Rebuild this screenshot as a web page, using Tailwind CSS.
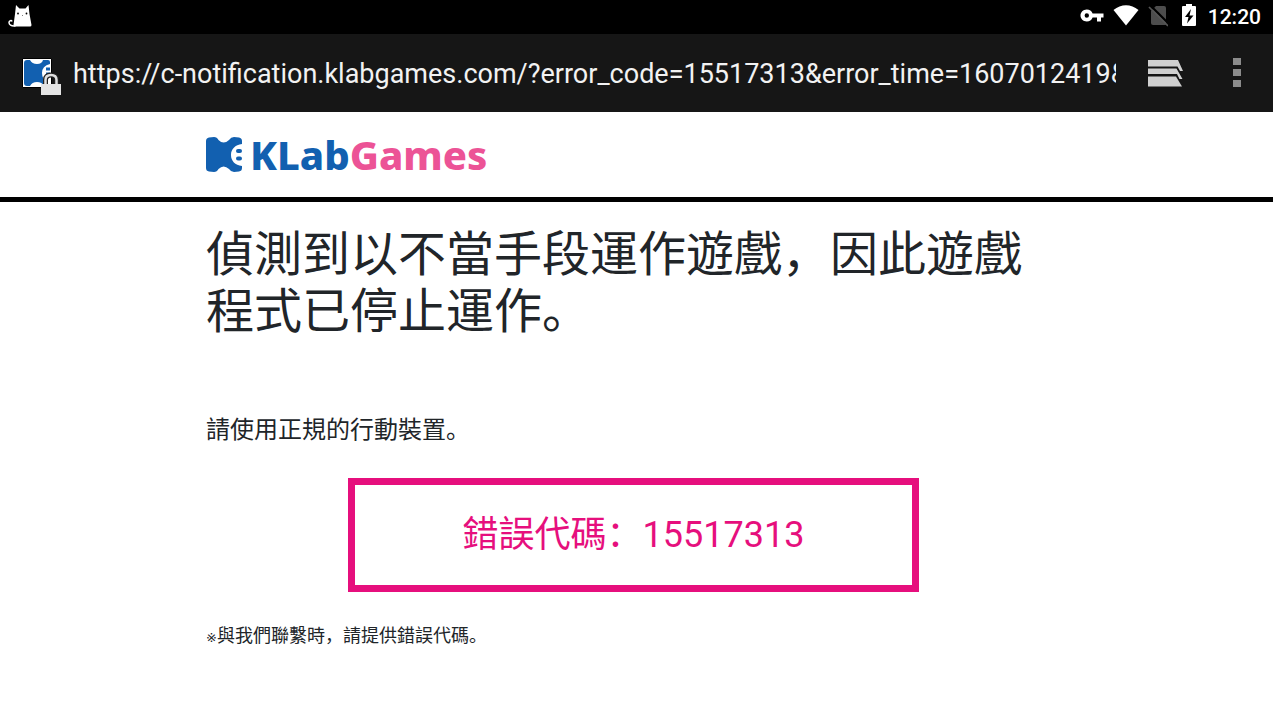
<!DOCTYPE html>
<html lang="zh-Hans">
<head>
    <meta charset="utf-8">
    <meta name="viewport" content="width=device-width, initial-scale=1">
    <title>KLabGames</title>
    <script src="https://cdn.jsdelivr.net/npm/@tailwindcss/browser@4"></script>
</head>
<body class="bg-white text-[#212529] font-[Roboto,'Noto_Sans_CJK_SC',sans-serif]">

<!-- Status bar -->
<div class="flex h-[34px] items-center justify-between bg-black pl-2 pr-3 text-white">
    <svg class="h-6 w-6" viewBox="0 0 24 24" fill="none">
        <path d="M8 0 L11.500 3.500 H17.500 L20.500 0 L21.500 9 L23.500 20 Q23.500 21.500 22 21.500 H7 Q5.500 21.500 5.500 20 L7 9 Z" fill="#fff"/>
        <path d="M7.500 21 C3 21.500 1 19.500 1 17.500 C1 15.500 3.500 15 4 16.500" stroke="#fff" stroke-width="1.500"/>
        <circle cx="10" cy="8.500" r="0.900" fill="#000"/>
        <circle cx="18.500" cy="8.500" r="0.900" fill="#000"/>
        <circle cx="14.500" cy="10.500" r="0.500" fill="#555"/>
    </svg>
    <div class="flex items-center">
        <svg class="h-6 w-6" viewBox="0 0 24 24" fill="#fff">
            <path fill-rule="evenodd" d="M12.600 8.500 C11.700 6.100 9.500 4.500 6.800 4.500 C3.100 4.500 0.500 7.300 0.500 10.500 C0.500 13.700 3.100 16.500 6.800 16.500 C9.500 16.500 11.700 14.900 12.600 12.500 H17 V16.500 H21 V12.500 H23.500 V8.500 Z M6.800 12.700 A2.200 2.200 0 1 1 6.800 8.300 A2.200 2.200 0 0 1 6.800 12.700 Z"/>
        </svg>
        <svg class="ml-2 h-6 w-7" viewBox="0 0 28 24" fill="#fff">
            <path d="M1.500 5 C9 -1.500 19 -1.500 26.500 5 L14 20.500 Z"/>
        </svg>
        <svg class="ml-2 h-6 w-5" viewBox="0 0 20 24">
            <path d="M8 1 H16 Q18 1 18 3 V19 Q18 20 17 20 H5 Q3 20 3 18 V6 Z" fill="#4d4d4d"/>
            <path d="M3 1 L21 19" stroke="#000" stroke-width="2"/>
            <path d="M1 2 L20 21" stroke="#555" stroke-width="1.700"/>
        </svg>
        <svg class="ml-[11px] h-6 w-5 overflow-visible" viewBox="0 0 20 24">
            <path d="M7 -1 H13 V1 H16 Q17 1 17 2 V20 Q17 21 16 21 H4 Q3 21 3 20 V2 Q3 1 4 1 H7 Z" fill="#fff"/>
            <path d="M12 4 L6 12 H9.500 L8 18.500 L14.500 10.500 H10.500 Z" fill="#000"/>
        </svg>
        <span class="ml-[9px] text-[21px] leading-6 font-medium">12:20</span>
    </div>
</div>

<!-- Address bar -->
<div class="flex h-[78px] items-center bg-[#161616] pl-[22px] pr-[25px]">
    <svg class="h-10 w-10 shrink-0 overflow-visible" viewBox="0 0 40 40" fill="none">
        <path d="M0.500 5.500 H29.500 V34.500 H0.500 Z" fill="#fff" stroke="#000"/>
        <path d="M2 10 Q2 7 5 7 H8 Q10 11 15 11 Q20 11 21 7 H26 Q28 7 28 9 V11 Q20 13 20 20 Q20 27 26 29 V33 H22 Q20 29 15 29 Q10 29 8 33 H5 Q2 33 2 30 Z" fill="#1260b0"/>
        <path d="M24 16 H28 M24 21 H28" stroke="#1260b0" stroke-width="3"/>
        <path d="M23.500 32 V27 Q23.500 22 29 22 Q34.500 22 34.500 27 V32" stroke="#222" stroke-width="5"/>
        <path d="M23.500 32 V27 Q23.500 22 29 22 Q34.500 22 34.500 27 V32" stroke="#e0e0e0" stroke-width="2.500"/>
        <path d="M19 31 H39 V42 H19 Z" fill="#e4e4e4"/>
    </svg>
    <input type="text" readonly aria-label="網址" value="https://c-notification.klabgames.com/?error_code=15517313&amp;error_time=1607012419&amp;" class="ml-[11px] min-w-0 flex-1 bg-transparent pt-[2px] text-[27px] leading-9 text-[#f2f2f2] outline-none">
    <button type="button" aria-label="分頁" class="ml-8">
        <svg class="h-8 w-9" viewBox="0 0 36 32" fill="#d0d0d0">
            <path d="M0 3 H30 L35 14 H32 L29.500 9.500 H0 Z"/>
            <path d="M0 11.500 H28.500 L34.500 22 H31.500 L29 17 H0 Z"/>
            <path d="M0 19.500 H28 L34 29.500 H0 Z"/>
        </svg>
    </button>
    <button type="button" aria-label="選單" class="ml-[44px]">
        <svg class="h-8 w-5" viewBox="0 0 20 32" fill="#8c8c8c">
            <path d="M5 1 H13 V8 H5 Z M5 12 H13 V19 H5 Z M5 23 H13 V30 H5 Z"/>
        </svg>
    </button>
</div>

<header class="border-b-[5px] border-black">
    <div class="mx-auto flex h-[85px] max-w-[861px] items-center">
        <a href="#" class="flex items-center gap-[7px]">
            <svg class="h-9 w-[37px]" viewBox="0 0 37 36">
                <path d="M0 4 Q0 1 3 0.500 L8 0 Q11 0 12.500 3 Q17.500 8 23 3 Q25 0 28 0 L33 0.500 Q36 1 36 4 V7 C29 8 25 12 25 18 C25 24 29 28 36 29 V31 Q36 34 33 34.500 L28 35 Q25 35 23 32 Q17.500 27 12.500 32 Q11 35 8 35 L3 34.500 Q0 34 0 31 Z" fill="#1260b0"/>
                <rect x="30" y="12" width="6" height="4" rx="2" fill="#1260b0"/>
                <rect x="30" y="19.500" width="6" height="4" rx="2" fill="#1260b0"/>
            </svg>
            <span class="font-['Noto_Sans',sans-serif] text-[40px] leading-[46px] font-extrabold text-[#1260b0]">KLab<span class="text-[#ec5396]">Games</span></span>
        </a>
    </div>
</header>

<main class="mx-auto max-w-[861px] pt-6">
    <h1 class="text-[48px] leading-[57px]">偵測到以不當手段運作遊戲，因此遊戲程式已停止運作。</h1>
    <p class="mt-[72px] text-2xl leading-9">請使用正規的行動裝置。</p>
    <div class="pr-[6px]">
        <p class="mx-auto mt-[30px] max-w-[571px] border-[7px] border-[#e60f7d] py-[23px] text-center text-4xl leading-[54px] text-[#e60f7d]">錯誤代碼：15517313</p>
    </div>
    <p class="mt-[30px] text-lg leading-[27px]"><span class="font-['DejaVu_Sans','Noto_Sans_CJK_SC',sans-serif] text-[13px]">※</span>與我們聯繫時，請提供錯誤代碼。</p>
</main>

</body>
</html>
